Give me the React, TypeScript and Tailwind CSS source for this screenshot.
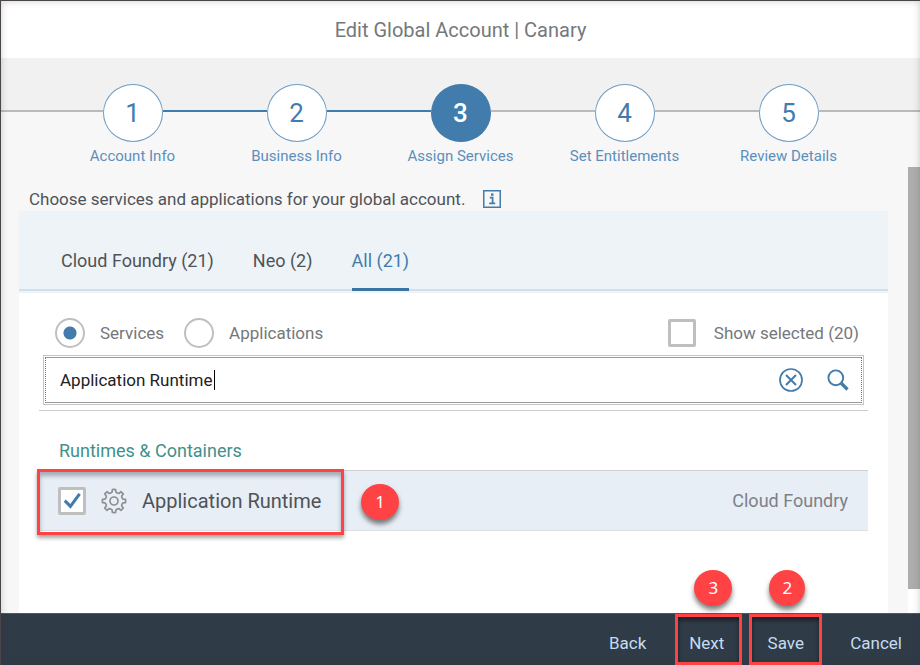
import { useState } from "react";

const steps = ["Account Info", "Business Info", "Assign Services", "Set Entitlements", "Review Details"];
const current = 3;

const tabs = ["Cloud Foundry (21)", "Neo (2)", "All (21)"];

function gearPath(cx: number, cy: number, teeth: number, outer: number, inner: number) {
  const step = (Math.PI * 2) / teeth;
  const point = (r: number, a: number) =>
    `${(cx + r * Math.sin(a)).toFixed(2)} ${(cy - r * Math.cos(a)).toFixed(2)}`;
  let d = "";
  for (let i = 0; i < teeth; i++) {
    const a = i * step;
    d += `${i === 0 ? "M" : "L"}${point(inner, a - step * 0.26)}`;
    d += `L${point(outer, a - step * 0.18)}`;
    d += `A${outer} ${outer} 0 0 1 ${point(outer, a + step * 0.18)}`;
    d += `L${point(inner, a + step * 0.26)}`;
    d += `Q${point(inner - 1, a + step * 0.5)} ${point(inner, a + step * 0.74)}`;
  }
  return d + "Z";
}

function GearIcon() {
  return (
    <svg viewBox="0 0 26 26" className="size-[26px] shrink-0" fill="none" stroke="#8c8f93" strokeWidth="1.7" strokeLinejoin="round" aria-hidden="true">
      <path d={gearPath(13, 13, 8, 11.6, 9.2)} />
      <circle cx="13" cy="13" r="4" />
    </svg>
  );
}

function InfoIcon() {
  return (
    <svg viewBox="0 0 18 18" className="size-[18px]" fill="none" stroke="#427cac" aria-hidden="true">
      <rect x="0.75" y="0.75" width="16.5" height="16.5" strokeWidth="1.5" />
      <path d="M6.8 7.7H9.6V13M6.2 13.3H12.2" strokeWidth="1.7" />
      <path d="M8 4.6H10.5" strokeWidth="2.4" />
    </svg>
  );
}

function ClearIcon() {
  return (
    <svg viewBox="0 0 24 24" className="size-6" fill="none" stroke="#427cac" strokeWidth="1.7" aria-hidden="true">
      <circle cx="12" cy="12" r="11" />
      <path d="M7 7L17 17M17 7L7 17" strokeWidth="2" />
    </svg>
  );
}

function SearchIcon() {
  return (
    <svg viewBox="0 0 22 22" className="size-[22px]" fill="none" stroke="#427cac" aria-hidden="true">
      <circle cx="8.8" cy="8.8" r="7.4" strokeWidth="1.9" />
      <path d="M14 14L20.5 20.5" strokeWidth="3.2" />
    </svg>
  );
}

function Badge({ label, className }: { label: string; className: string }) {
  return (
    <span
      className={
        "absolute flex h-9 items-center justify-center rounded-[50%] bg-[#ff4244] font-['Noto_Sans',sans-serif] text-[17px] leading-6 text-white shadow-[0_4px_5px_rgba(0,0,0,0.5)] " +
        className
      }
    >
      {label}
    </span>
  );
}

function Steps() {
  return (
    <ol className="flex bg-[linear-gradient(#f1f1f1_54px,#f7f7f7_54px)] pt-[26px]">
      <li aria-hidden="true" className="mt-[26px] h-0.5 flex-1 bg-[#bbbbbb]" />
      {steps.map((label, i) => {
        const n = i + 1;
        return (
          <li key={label} className="w-41">
            <button type="button" className="flex h-[83px] w-full flex-col items-center text-[15px] leading-5 text-[#5b8fbc]">
              <span className="flex w-full">
                <span className={"mt-[26px] h-0.5 flex-1 " + (n > 1 && n <= current ? "bg-[#427cac]" : "bg-[#bbbbbb]")} />
                <span
                  className={
                    "flex h-[58px] w-[60px] items-center justify-center rounded-[50%] border text-[26px] leading-8 " +
                    (n === current ? "border-[#427cac] bg-[#427cac] font-medium text-white" : "border-[#6d9cc5] bg-white text-[#427cac]")
                  }
                >
                  {n}
                </span>
                <span className={"mt-[26px] h-0.5 flex-1 " + (n < current ? "bg-[#427cac]" : "bg-[#bbbbbb]")} />
              </span>
              <span className="mt-1">{label}</span>
            </button>
          </li>
        );
      })}
      <li aria-hidden="true" className="mt-[26px] h-0.5 flex-1 bg-[#bbbbbb]" />
    </ol>
  );
}

export default function App() {
  const [query, setQuery] = useState("Application Runtime");
  const [kind, setKind] = useState("services");
  const [tab, setTab] = useState(2);
  const [onlySelected, setOnlySelected] = useState(false);
  const [checked, setChecked] = useState(true);

  const radio =
    "size-[30px] shrink-0 appearance-none rounded-full border-2 border-[#bfbfbf] bg-white checked:bg-[radial-gradient(circle,#427cac_6px,transparent_7px)]";

  return (
    <div className="relative flex min-h-screen flex-col border-t border-l border-[#4a4548] bg-[#f7f7f7] font-[Roboto,sans-serif] text-[17px] leading-6 text-[#4f5357]">
      <div className="pointer-events-none absolute inset-0 shadow-[inset_0_0_7px_rgba(60,50,60,0.25)]" />
      <header className="flex h-[57px] items-center justify-center bg-white">
        <h1 className="text-xl leading-6 text-[#75787b]">Edit Global Account | Canary</h1>
      </header>

      <Steps />

      <div className="flex flex-1">
        <main className="flex min-w-0 flex-1 flex-col pr-5 pl-[18px]">
          <div className="flex items-center gap-[18px] pt-5 pl-2.5">
            <p>Choose services and applications for your global account.</p>
            <button type="button" aria-label="More information">
              <InfoIcon />
            </button>
          </div>

          <section className="flex-1 bg-white">
            <div className="flex h-[82px] border-b-2 border-[#edf3f8] bg-[#eef3f8]">
              <div role="tablist" className="flex flex-1 gap-[39px] border-b-2 border-[#cfdfee] pl-[42px] text-lg leading-6">
                {tabs.map((label, i) => (
                  <button
                    key={label}
                    type="button"
                    role="tab"
                    aria-selected={tab === i}
                    onClick={() => setTab(i)}
                    className={"-mb-0.5 border-b-3 pt-[26px] pb-[3px] " + (tab === i ? "border-[#3b73a3] text-[#427cac]" : "border-transparent")}
                  >
                    {label}
                  </button>
                ))}
              </div>
            </div>

            <div className="px-5">
              <div className="flex h-[62px] items-center pt-[18px] pr-[9px] pl-4 text-[#75787b]">
                <input id="services" type="radio" name="kind" className={radio} checked={kind === "services"} onChange={() => setKind("services")} />
                <label htmlFor="services" className="pl-[15px]">Services</label>
                <input id="applications" type="radio" name="kind" className={radio + " ml-5"} checked={kind === "applications"} onChange={() => setKind("applications")} />
                <label htmlFor="applications" className="pl-[15px]">Applications</label>
                <input
                  id="selected"
                  type="checkbox"
                  checked={onlySelected}
                  onChange={(e) => setOnlySelected(e.target.checked)}
                  className="ml-auto size-7 appearance-none rounded-[2px] border-3 border-[#bfbfbf] bg-white checked:bg-[#427cac]"
                />
                <label htmlFor="selected" className="pl-[18px]">Show selected (20)</label>
              </div>

              <div className="border-b border-[#cccccc] pr-1 pb-[5px] pl-1">
                <form className="border border-[#c4c4c4] p-px" onSubmit={(e) => e.preventDefault()}>
                  <div className="relative flex h-[46px] items-center border border-x-[#777777] border-y-[#999999] [border-inline-style:dotted] pr-3 pl-[14px]">
                    <input
                      aria-label="Search services"
                      value={query}
                      onChange={(e) => setQuery(e.target.value)}
                      className="min-w-0 flex-1 bg-transparent text-[#222222] outline-none"
                    />
                    <span className="absolute left-[168px] h-5 w-px bg-black" />
                    <button type="button" aria-label="Clear" onClick={() => setQuery("")}>
                      <ClearIcon />
                    </button>
                    <button type="submit" aria-label="Search" className="ml-6">
                      <SearchIcon />
                    </button>
                  </div>
                </form>
              </div>

              <h2 className="pt-7 pb-[7px] pl-5 text-lg leading-6 text-[#3f918b]">Runtimes &amp; Containers</h2>
              <div className="relative flex h-[61px] items-center border-y border-t-[#cfcfd2] border-b-[#dddfe2] bg-[#e7eef6] pr-5 pl-[19px]">
                <span className="relative flex size-7">
                  <input
                    id="runtime"
                    type="checkbox"
                    checked={checked}
                    onChange={(e) => setChecked(e.target.checked)}
                    className="peer size-7 appearance-none rounded-[2px] border-3 border-[#bfbfbf] bg-white"
                  />
                  <svg viewBox="0 0 28 28" className="pointer-events-none absolute inset-0 hidden peer-checked:block" fill="none" stroke="#427cac" strokeWidth="3" aria-hidden="true">
                    <path d="M6.8 13.6L12.4 19.4L21.6 6.8" />
                  </svg>
                </span>
                <label htmlFor="runtime" className="flex items-center gap-[15px] pl-[15px] text-xl leading-6">
                  <GearIcon />
                  Application Runtime
                </label>
                <span className="ml-auto text-lg leading-6 text-[#7d8186]">Cloud Foundry</span>
                <span className="pointer-events-none absolute -top-0.5 -left-0.5 h-[66px] w-[307px] border-3 border-[#ff4244] shadow-[0_3px_4px_rgba(0,0,0,0.35),inset_0_4px_4px_rgba(60,70,90,0.4)]" />
                <Badge label="1" className="top-[13px] left-[322px] w-[38px]" />
              </div>
            </div>
          </section>
        </main>
        <div className="w-3 bg-white pb-6" aria-hidden="true">
          <div className="h-full bg-[#adadad]" />
        </div>
      </div>

      <footer className="flex h-[52px] items-stretch justify-end border-t border-[#4a5a66] bg-[#2f3b47] pr-[18px] text-[#c5dcf2]">
        <button type="button" className="pt-1.5">Back</button>
        <span className="relative ml-[29px] flex">
          <button type="button" className="w-[67px] border-3 border-[#ff4244] pt-1.5 pr-1 shadow-[inset_0_3px_4px_rgba(0,0,0,0.5)]">Next</button>
          <Badge label="3" className="-top-11 left-[19px] w-[38px]" />
        </span>
        <span className="relative ml-[7px] flex">
          <button type="button" className="w-[73px] border-3 border-[#ff4244] pt-1.5 shadow-[inset_0_3px_4px_rgba(0,0,0,0.5)]">Save</button>
          <Badge label="2" className="-top-11 left-5 w-9" />
        </span>
        <button type="button" className="ml-7 pt-1.5">Cancel</button>
      </footer>
    </div>
  );
}
